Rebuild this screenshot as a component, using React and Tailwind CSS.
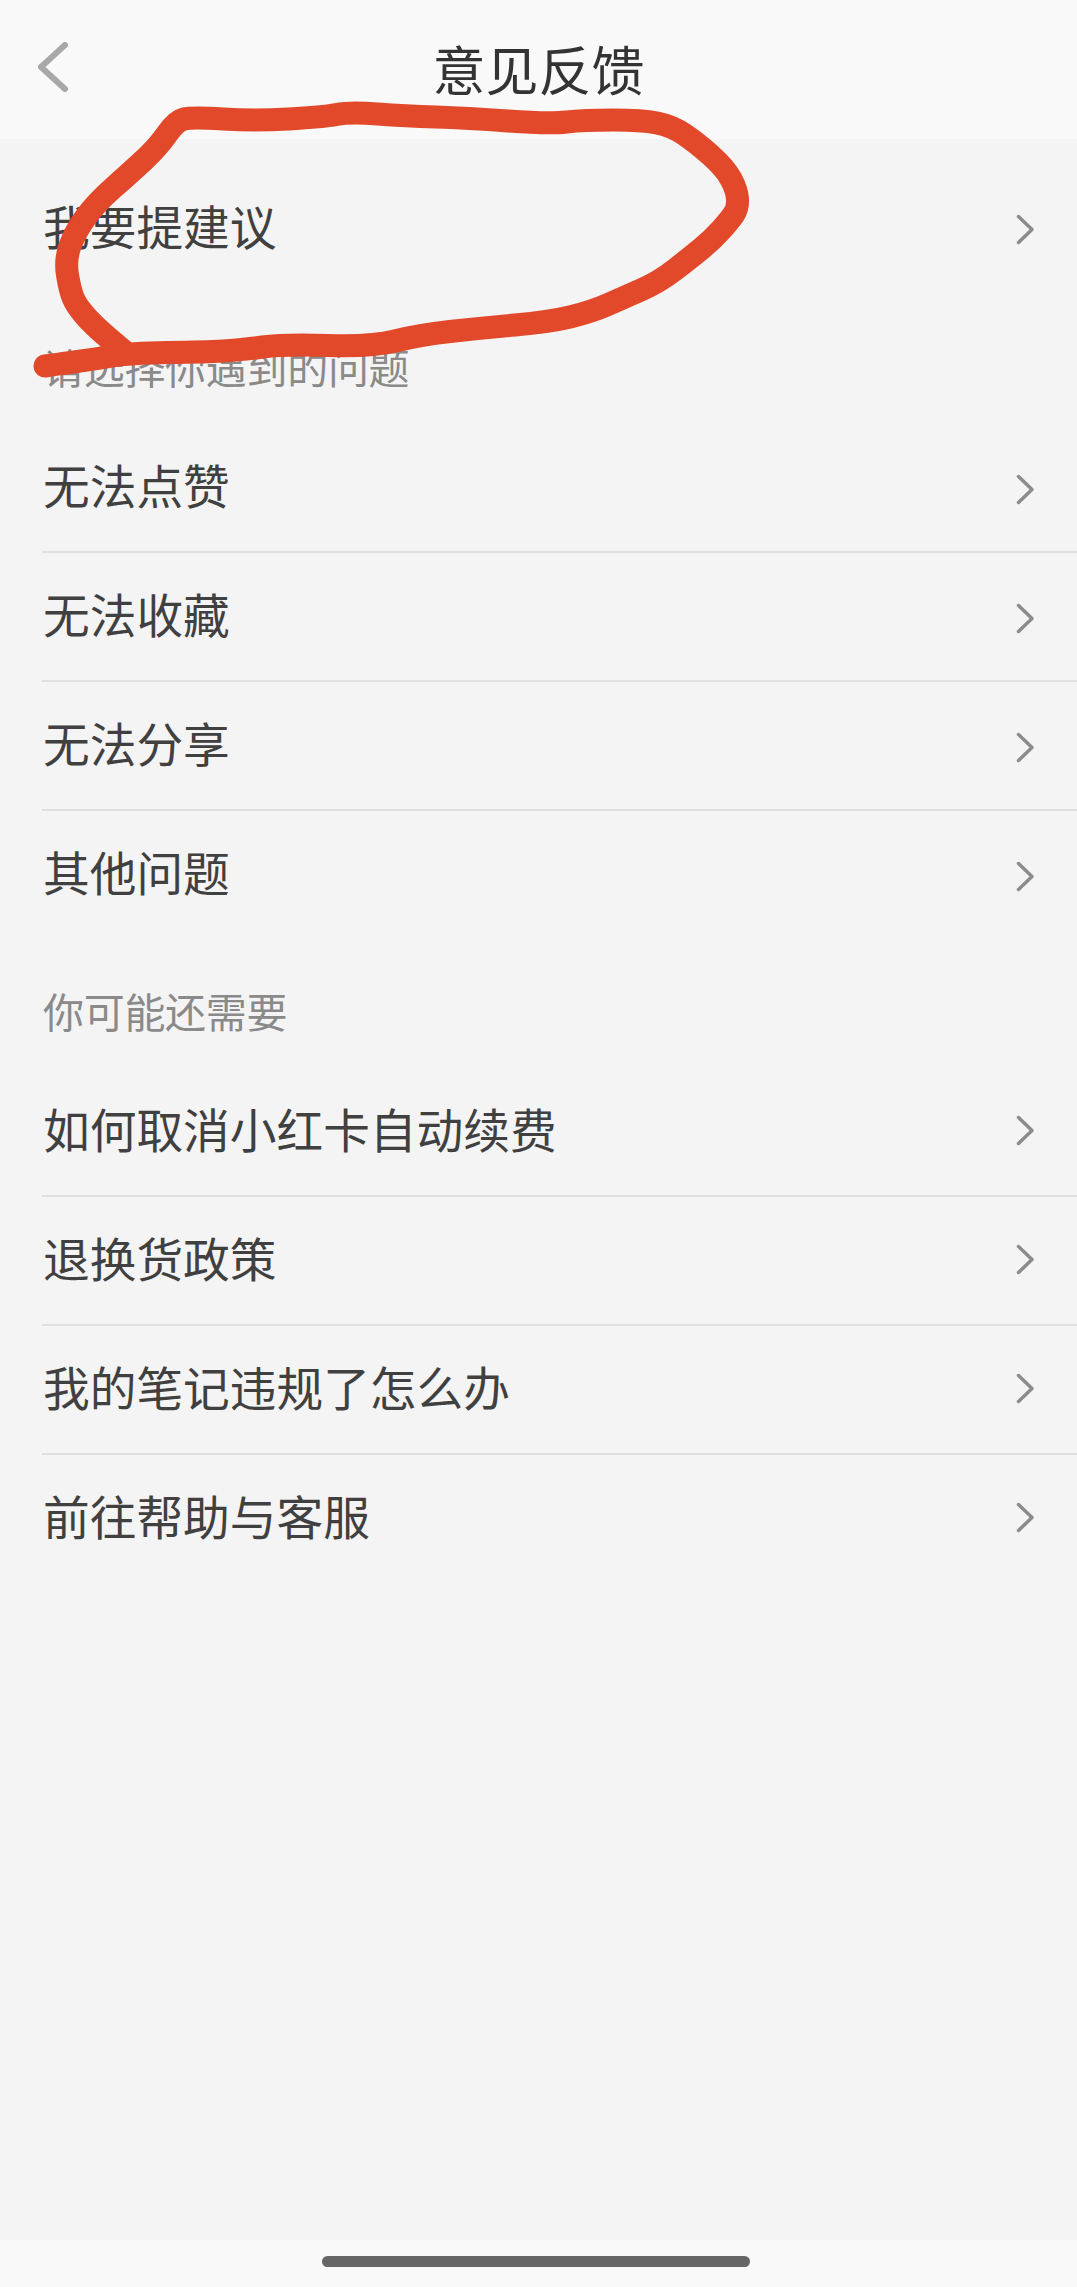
import React from 'react';

const issues = ['无法点赞', '无法收藏', '无法分享', '其他问题'];
const more = ['如何取消小红卡自动续费', '退换货政策', '我的笔记违规了怎么办', '前往帮助与客服'];

// hand drawn circle around the first row
const scribble = [
  [45, 366], [89, 360], [130, 353], [206, 352], [240, 350], [285, 344], [371, 347], [419, 335],
  [481, 328], [549, 322], [591, 312], [625, 297], [659, 282], [690, 258], [712, 240], [730, 220], [738, 208], [737, 190],
  [725, 168], [697, 143], [672, 126], [642, 120], [584, 120], [549, 124], [467, 118], [405, 116], [350, 112], [323, 117], [254, 121],
  [192, 117], [176, 121], [158, 147], [130, 173], [96, 203], [75, 232], [65, 260], [70, 290], [76, 305], [93, 325], [125, 352],
];

const scribblePath = () => {
  let d = `M${scribble[0][0]} ${scribble[0][1]}`;
  for (let i = 1; i < scribble.length - 1; i++) {
    const [x, y] = scribble[i];
    const [nx, ny] = scribble[i + 1];
    d += ` Q${x} ${y} ${(x + nx) / 2} ${(y + ny) / 2}`;
  }
  const last = scribble[scribble.length - 1];
  return `${d} L${last[0]} ${last[1]}`;
};

function Chevron({ className = '' }) {
  return (
    <svg className={`w-[19px] h-[31px] shrink-0 ${className}`} viewBox="0 0 19 31" fill="none">
      <path d="M2.5 2.5L16 15.5L2.5 28.5" stroke="#8c8c8c" strokeWidth="3.5" strokeLinecap="round" strokeLinejoin="round" />
    </svg>
  );
}

function Row({ label, line, chevronClass }) {
  return (
    <div className="relative flex items-center justify-between h-[129px] pl-[43px] pr-[42px]">
      <span className="mb-[6px] text-[46.7px] leading-none text-[#404040]">{label}</span>
      <Chevron className={chevronClass} />
      {line && <div className="absolute left-[42px] right-0 bottom-[-1px] h-[2px] bg-[#e0e0e0]" />}
    </div>
  );
}

export default function App() {
  return (
    <div className="relative w-[1077px] h-[2287px] overflow-hidden bg-[#f4f4f4] font-['Noto_Sans_CJK_SC','Noto_Sans',sans-serif]">
      <header className="relative flex items-center justify-center h-[139px] bg-[#f9f9f9]">
        <svg className="absolute left-[36px] top-[42px] w-[33px] h-[50px]" viewBox="0 0 33 50" fill="none">
          <path d="M29 3L5 25L29 47" stroke="#a8a8a8" strokeWidth="6" strokeLinecap="round" strokeLinejoin="round" />
        </svg>
        <h1 className="mb-[3px] text-[53px] leading-none font-normal text-[#333333]">意见反馈</h1>
      </header>

      <div className="flex items-center justify-between h-[181px] pl-[43px] pr-[42px]">
        <span className="mb-[9px] text-[46.7px] leading-none text-[#404040]">我要提建议</span>
        <Chevron />
      </div>

      <div className="flex items-end h-[103px] pb-[36px] pl-[43px] text-[41px] tracking-[-0.3px] leading-none text-[#8a8a8a]">请选择你遇到的问题</div>
      {issues.map((item, i) => (
        <Row key={item} label={item} line={i < issues.length - 1} chevronClass="mt-[4px]" />
      ))}

      <div className="flex items-end h-[128px] pb-[36px] pl-[43px] text-[41px] tracking-[-0.3px] leading-none text-[#8a8a8a]">你可能还需要</div>
      {more.map((item, i) => (
        <Row key={item} label={item} line={i < more.length - 1} chevronClass="mb-[2px]" />
      ))}

      {/* home indicator */}
      <div className="absolute left-0 right-0 bottom-0 h-[47px] bg-[#f9f9f9]">
        <div className="absolute left-[322px] top-[16px] w-[428px] h-[11px] rounded-full bg-[#666666]" />
      </div>

      <svg className="absolute left-0 top-0 w-[1077px] h-[420px] pointer-events-none" viewBox="0 0 1077 420" fill="none">
        <path d={scribblePath()} stroke="#e2482a" strokeWidth="23" strokeLinecap="round" strokeLinejoin="round" />
      </svg>
    </div>
  );
}
